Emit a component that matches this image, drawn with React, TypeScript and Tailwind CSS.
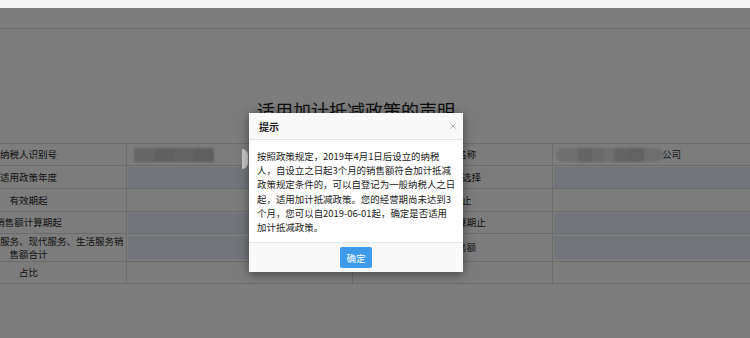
import { X } from "lucide-react";

type Row = {
  h: string;
  left: string;
  right: string;
  leftVal: "input" | "blur" | "none";
  rightVal: "input" | "company" | "none";
  tall?: boolean;
};

const ROWS: Row[] = [
  { h: "h-[22px]", left: "纳税人识别号", right: "纳税人名称", leftVal: "blur", rightVal: "company" },
  { h: "h-[23px]", left: "适用政策年度", right: "适用政策选择", leftVal: "input", rightVal: "input" },
  { h: "h-[23px]", left: "有效期起", right: "有效期止", leftVal: "none", rightVal: "none" },
  { h: "h-[22px]", left: "销售额计算期起", right: "销售额计算期止", leftVal: "input", rightVal: "input" },
  { h: "h-[28px]", left: "", right: "全部销售额", leftVal: "input", rightVal: "input", tall: true },
  { h: "h-[22px]", left: "占比", right: "", leftVal: "none", rightVal: "none" },
];

const LINES = [
  "按照政策规定，2019年4月1日后设立的纳税",
  "人，自设立之日起3个月的销售额符合加计抵减",
  "政策规定条件的，可以自登记为一般纳税人之日",
  "起，适用加计抵减政策。您的经营期尚未达到3",
  "个月，您可以自2019-06-01起，确定是否适用",
  "加计抵减政策。",
];

function Input({ tall }: { tall?: boolean }) {
  return tall ? (
    <div className="flex h-full items-center pl-[1px]">
      <div className="h-[23px] w-full bg-[#e9eff6]" />
    </div>
  ) : (
    <div className="h-full pl-[1px] pt-[1px]">
      <div className="h-full w-full bg-[#e9eff6]" />
    </div>
  );
}

export default function App() {
  return (
    <div className="relative h-[338px] w-[750px] overflow-hidden bg-white font-['Noto_Sans_CJK_SC','Noto_Sans',sans-serif] text-[#2a2a2a]">
      <div className="h-[8px] bg-[#f5f5f5]" />
      <div className="h-[21px] border-b border-[#d4d4d4]" />

      <div className="ml-[-69px] w-[850px]">
        <h1 className="mt-[69px] text-center text-[18px] leading-[24px] text-[#1a1a1a]">适用加计抵减政策的声明</h1>

        <div className="mt-[21px] border-t border-[#dedede]">
          {ROWS.map((r, i) => (
            <div key={i} className={`grid grid-cols-[196px_226px_200px_228px] border-b border-[#dedede] ${r.h}`}>
              <div className="flex items-center justify-center border-r border-[#dedede] text-center text-[9.5px] leading-[13px]">
                {r.tall ? (
                  <span>
                    邮政服务、电信服务、现代服务、生活服务销
                    <br />
                    售额合计
                  </span>
                ) : (
                  r.left
                )}
              </div>
              <div className="border-r border-[#dedede]">
                {r.leftVal === "input" && <Input tall={r.tall} />}
                {r.leftVal === "blur" && (
                  <div className="flex h-full items-center pl-[7px]">
                    <div className="flex h-[14px] w-[80px] blur-[1px]">
                      <div className="w-[20px] bg-[#d2d2d2]" />
                      <div className="w-[20px] bg-[#c8c8c8]" />
                      <div className="w-[20px] bg-[#cdcdcd]" />
                      <div className="w-[20px] bg-[#c4c4c4]" />
                    </div>
                  </div>
                )}
              </div>
              <div className="flex items-center justify-center border-r border-[#dedede] text-[9.5px]">{r.right}</div>
              <div>
                {r.rightVal === "input" && <Input tall={r.tall} />}
                {r.rightVal === "company" && (
                  <div className="flex h-full items-center pl-[3px] text-[9.5px]">
                    <div className="flex h-[14px] w-[108px] overflow-hidden rounded-full bg-[#e4e4e4] blur-[1px]">
                      <div className="w-[22px]" />
                      <div className="w-[14px] bg-[#cfcfcf]" />
                      <div className="w-[12px] bg-[#d8d8d8]" />
                      <div className="w-[10px]" />
                      <div className="w-[14px] bg-[#d0d0d0]" />
                      <div className="w-[16px] bg-[#c9c9c9]" />
                    </div>
                    <span className="-ml-[2px]">公司</span>
                  </div>
                )}
              </div>
            </div>
          ))}
        </div>
      </div>

      <div className="absolute bottom-0 left-0 right-0 top-[8px] bg-black/[0.515]" />

      <div className="absolute left-[242px] top-[149px] h-[20px] w-[6px] rounded-r-full bg-[#c9c9c9]" />

      <div className="absolute left-[249px] top-[113px] w-[214px] bg-white shadow-[0_2px_10px_rgba(0,0,0,0.45)]">
        <div className="flex h-[27px] items-center justify-between border-b border-[#e5e5e5] bg-[#f9f9f9] pl-[10px] pr-[5px]">
          <span className="text-[10px] font-bold text-[#222]">提示</span>
          <X size={10} strokeWidth={1.4} className="text-[#888]" />
        </div>
        <div className="px-[8px] pb-[8px] pt-[9px] text-[9.45px] leading-[14.2px] text-[#222]">
          {LINES.map((l, i) => (
            <div key={i} className="whitespace-nowrap">
              {l}
            </div>
          ))}
        </div>
        <div className="flex h-[30px] items-center justify-center border-t border-[#e5e5e5] bg-[#f9f9f9]">
          <button className="h-[21px] w-[32px] rounded-[2px] bg-[#3e9bea] text-[9.5px] text-white">确定</button>
        </div>
      </div>
    </div>
  );
}
